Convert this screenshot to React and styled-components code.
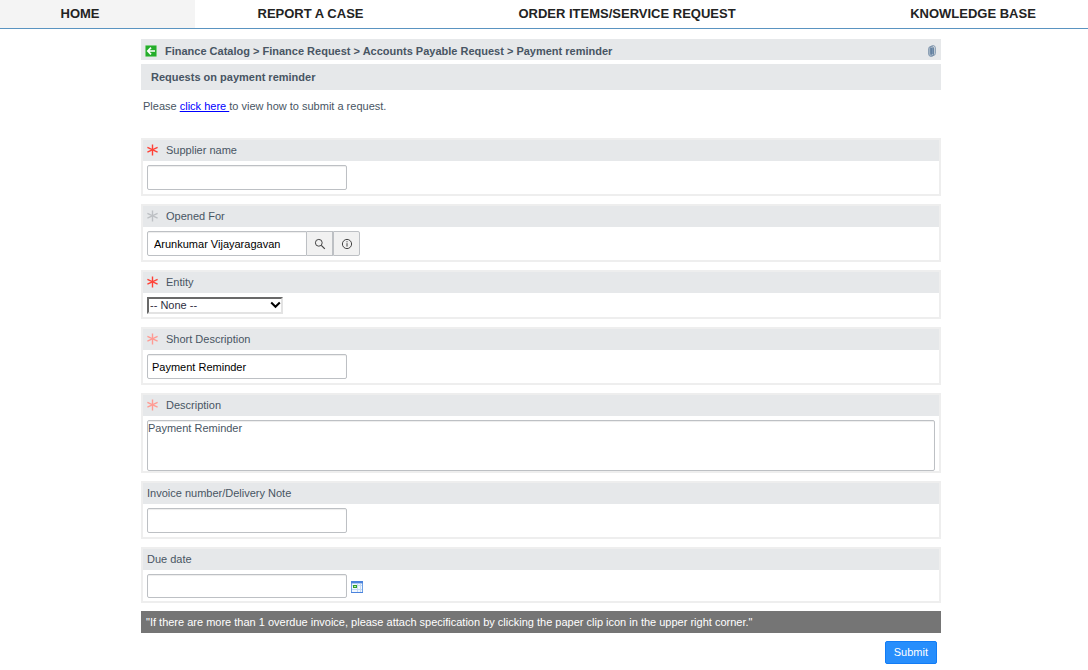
import React from "react";
import styled, { createGlobalStyle, css } from "styled-components";

const GlobalStyle = createGlobalStyle`
  *, *::before, *::after { box-sizing: border-box; }
  body {
    margin: 0;
    background: #fff;
    color: #485563;
    font: 11px/16px "Liberation Sans", Arial, sans-serif;
  }
`;

const Nav = styled.nav`
  display: grid;
  grid-template-columns: 195fr 231fr 402fr 260fr;
  border-bottom: 1px solid #5a94c1;
`;

const NavLink = styled.a`
  display: block;
  height: 28px;
  line-height: 27px;
  font-size: 13px;
  font-weight: 700;
  text-align: center;
  white-space: nowrap;
  text-decoration: none;
  color: #232323;
  background: ${(p) => (p.$active ? "#f4f4f4" : "transparent")};
  padding-left: ${(p) => p.$before || 0}px;
  padding-right: ${(p) => p.$after || 0}px;
`;

const Page = styled.main`
  padding: 10px 6px 0 0;
`;

const Content = styled.div`
  max-width: 800px;
  margin: 0 auto;
`;

const Bar = styled.header`
  display: flex;
  align-items: center;
  height: 21px;
  padding: 2px 5px 0 4px;
  background: #e6e8ea;
`;

const IconButton = styled.button`
  display: flex;
  padding: 0;
  border: 0;
  background: none;
`;

const Crumbs = styled.h1`
  flex: 1;
  margin: 0;
  padding-left: 8px;
  font-size: 11px;
  line-height: 16px;
`;

const Title = styled.h2`
  height: 26px;
  margin: 4px 0 0;
  padding-left: 10px;
  font-size: 11px;
  line-height: 26px;
  background: #e6e8ea;
`;

const Intro = styled.p`
  margin: 8px 0 24px;
  padding-left: 2px;
  a { color: #00f; }
`;

const Form = styled.form`
  display: flex;
  flex-direction: column;
  gap: 8px;
`;

const FieldBox = styled.div`
  border: 2px solid #eee;
`;

const Label = styled.label`
  display: flex;
  align-items: center;
  height: 21px;
  padding: 0 4px 2px;
  background: #e6e8ea;
`;

const Mark = styled.span`
  display: flex;
  width: 19px;
  color: ${(p) => p.$color};
`;

const Controls = styled.div`
  display: flex;
  align-items: center;
  padding: 4px 4px ${(p) => p.$bottom}px;
`;

const control = css`
  border: 1px solid #bdc0c4;
  border-radius: 2px;
  background: #fff;
  box-shadow: inset 0 1px 1px #00000013;
`;

const TextInput = styled.input`
  ${control}
  width: ${(p) => (p.$lookup ? 160 : 200)}px;
  height: ${(p) => (p.$short ? 24 : 25)}px;
  padding: 1px ${(p) => (p.$lookup ? 6 : 4)}px 0;
  font: 11px "Liberation Sans", Arial, sans-serif;
  color: #000;
  ${(p) => p.$lookup && "border-radius: 2px 0 0 2px;"}
`;

const AddonButton = styled.button`
  display: flex;
  align-items: center;
  justify-content: center;
  width: ${(p) => (p.$last ? 27 : 26)}px;
  height: 25px;
  padding: 0;
  border: 1px solid #bdc0c4;
  border-left-width: ${(p) => (p.$last ? 1 : 0)}px;
  border-radius: ${(p) => (p.$last ? "0 2px 2px 0" : "0")};
  background: #f1f1f1;
  color: #444;
`;

const SelectWrap = styled.span`
  position: relative;
  display: flex;
  svg {
    position: absolute;
    right: 2px;
    top: 4px;
    pointer-events: none;
  }
`;

const Select = styled.select`
  appearance: none;
  width: 136px;
  height: 17px;
  padding: 0 0 0 1px;
  border: 2px solid #e3e3e3;
  border-top-color: #696969;
  border-left-color: #696969;
  border-radius: 0;
  background: #fff;
  font: 11px/13px "Liberation Sans", Arial, sans-serif;
  color: #2e2e3e;
`;

const TextArea = styled.textarea`
  ${control}
  flex: 1;
  height: 51px;
  padding: 0;
  resize: none;
  font: 11px/15px "Liberation Sans", Arial, sans-serif;
  color: #485563;
`;

const CalendarButton = styled(IconButton)`
  margin: 2px 0 0 4px;
`;

const Note = styled.p`
  height: 22px;
  margin: 0;
  padding-left: 5px;
  line-height: 22px;
  color: #fff;
  background: #757575;
`;

const Submit = styled.button`
  align-self: flex-end;
  height: 23px;
  margin-right: 4px;
  padding: 0 8px 1px;
  border: 1px solid #127cf5;
  border-radius: 2px;
  background: #278efc;
  color: #fff;
  font: 11px "Liberation Sans", Arial, sans-serif;
`;

const Asterisk = () => (
  <svg width="12" height="12" viewBox="0 0 12 12" fill="none" stroke="currentColor" aria-hidden="true">
    <path d="M5.5 0.5v11" strokeWidth="1.4" />
    <path d="M0.4 3.4L10.6 8.2M10.6 3.4L0.4 8.2" strokeWidth="1.4" />
  </svg>
);

const BackIcon = () => (
  <svg width="12" height="12" viewBox="0 0 12 12" fill="none" aria-hidden="true">
    <rect width="12" height="12" fill="#d9efd8" />
    <rect x="0.5" y="0.5" width="11" height="11" fill="#25ad2b" />
    <path d="M6 2.6L2.8 6L6 9.4M3 6h7" stroke="#fff" strokeWidth="1.7" />
  </svg>
);

const ClipIcon = () => (
  <svg width="8" height="12" viewBox="0 0 8 12" fill="none" aria-hidden="true">
    <rect x="0.7" y="1.4" width="5" height="10" rx="2.4" fill="#a9bacb" stroke="#7e94ac" />
    <rect x="2.6" y="0.6" width="4.7" height="10" rx="2.3" stroke="#7e94ac" />
    <path d="M3.2 3v6.4M5 3v6" stroke="#476a91" />
  </svg>
);

const SearchIcon = () => (
  <svg width="12" height="12" viewBox="0 0 12 12" fill="none" stroke="currentColor" aria-hidden="true">
    <circle cx="4.8" cy="4.8" r="3.4" />
    <path d="M7.3 7.3l3.5 3.5" strokeWidth="1.2" />
  </svg>
);

const InfoIcon = () => (
  <svg width="12" height="12" viewBox="0 0 12 12" fill="none" stroke="currentColor" aria-hidden="true">
    <circle cx="6" cy="6" r="4.6" />
    <path d="M6 5.2v3.4M6 3.2v1.1" />
  </svg>
);

const ChevronIcon = () => (
  <svg width="11" height="8" viewBox="0 0 11 8" fill="none" stroke="#000" strokeWidth="2" aria-hidden="true">
    <path d="M1.2 1.5L5.5 5.8L9.8 1.5" />
  </svg>
);

const CalendarIcon = () => (
  <svg width="12" height="12" viewBox="0 0 12 12" fill="none" aria-hidden="true">
    <rect x="0.5" y="0.5" width="11" height="11" fill="#f2f8ff" stroke="#6ea0e4" />
    <path d="M0 1.2h12" stroke="#4b83dd" strokeWidth="2.4" />
    <path d="M0 11.5h12" stroke="#4b83dd" />
    <path d="M1 4.5h10M1 8.5h10M6.5 3v8M9.5 3v8" stroke="#c5daf5" />
    <rect x="2.5" y="4.5" width="3" height="2" fill="#b6e8b0" stroke="#32a02c" />
  </svg>
);

const MARKS = { required: "#ff4136", readonly: "#bdc0c4", filled: "#ff9b93" };

function Field({ id, label, mark, bottom = 4, children }) {
  return (
    <FieldBox>
      <Label htmlFor={id}>
        {mark && (
          <Mark $color={MARKS[mark]}>
            <Asterisk />
          </Mark>
        )}
        {label}
      </Label>
      <Controls $bottom={bottom}>{children}</Controls>
    </FieldBox>
  );
}

export default function App() {
  return (
    <>
      <GlobalStyle />
      <Nav>
        <NavLink href="#home" $active $after={35}>HOME</NavLink>
        <NavLink href="#report">REPORT A CASE</NavLink>
        <NavLink href="#order">ORDER ITEMS/SERVICE REQUEST</NavLink>
        <NavLink href="#knowledge" $before={30}>KNOWLEDGE BASE</NavLink>
      </Nav>
      <Page>
        <Content>
          <Bar>
            <IconButton type="button" aria-label="Back"><BackIcon /></IconButton>
            <Crumbs>Finance Catalog &gt; Finance Request &gt; Accounts Payable Request &gt; Payment reminder</Crumbs>
            <IconButton type="button" aria-label="Add attachment"><ClipIcon /></IconButton>
          </Bar>
          <Title>Requests on payment reminder</Title>
          <Intro>
            Please <a href="#help">click here </a>to view how to submit a request.
          </Intro>
          <Form onSubmit={(e) => e.preventDefault()}>
            <Field id="supplier" label="Supplier name" mark="required">
              <TextInput id="supplier" />
            </Field>
            <Field id="opened" label="Opened For" mark="readonly">
              <TextInput id="opened" $lookup defaultValue="Arunkumar Vijayaragavan" />
              <AddonButton type="button" aria-label="Look up"><SearchIcon /></AddonButton>
              <AddonButton type="button" aria-label="Details" $last><InfoIcon /></AddonButton>
            </Field>
            <Field id="entity" label="Entity" mark="required" bottom={3}>
              <SelectWrap>
                <Select id="entity"><option>-- None --</option></Select>
                <ChevronIcon />
              </SelectWrap>
            </Field>
            <Field id="short" label="Short Description" mark="filled">
              <TextInput id="short" defaultValue="Payment Reminder" />
            </Field>
            <Field id="description" label="Description" mark="filled" bottom={0}>
              <TextArea id="description" defaultValue="Payment Reminder" />
            </Field>
            <Field id="invoice" label="Invoice number/Delivery Note">
              <TextInput id="invoice" />
            </Field>
            <Field id="due" label="Due date" bottom={3}>
              <TextInput id="due" $short />
              <CalendarButton type="button" aria-label="Choose date"><CalendarIcon /></CalendarButton>
            </Field>
            <Note>"If there are more than 1 overdue invoice, please attach specification by clicking the paper clip icon in the upper right corner."</Note>
            <Submit type="submit">Submit</Submit>
          </Form>
        </Content>
      </Page>
    </>
  );
}
